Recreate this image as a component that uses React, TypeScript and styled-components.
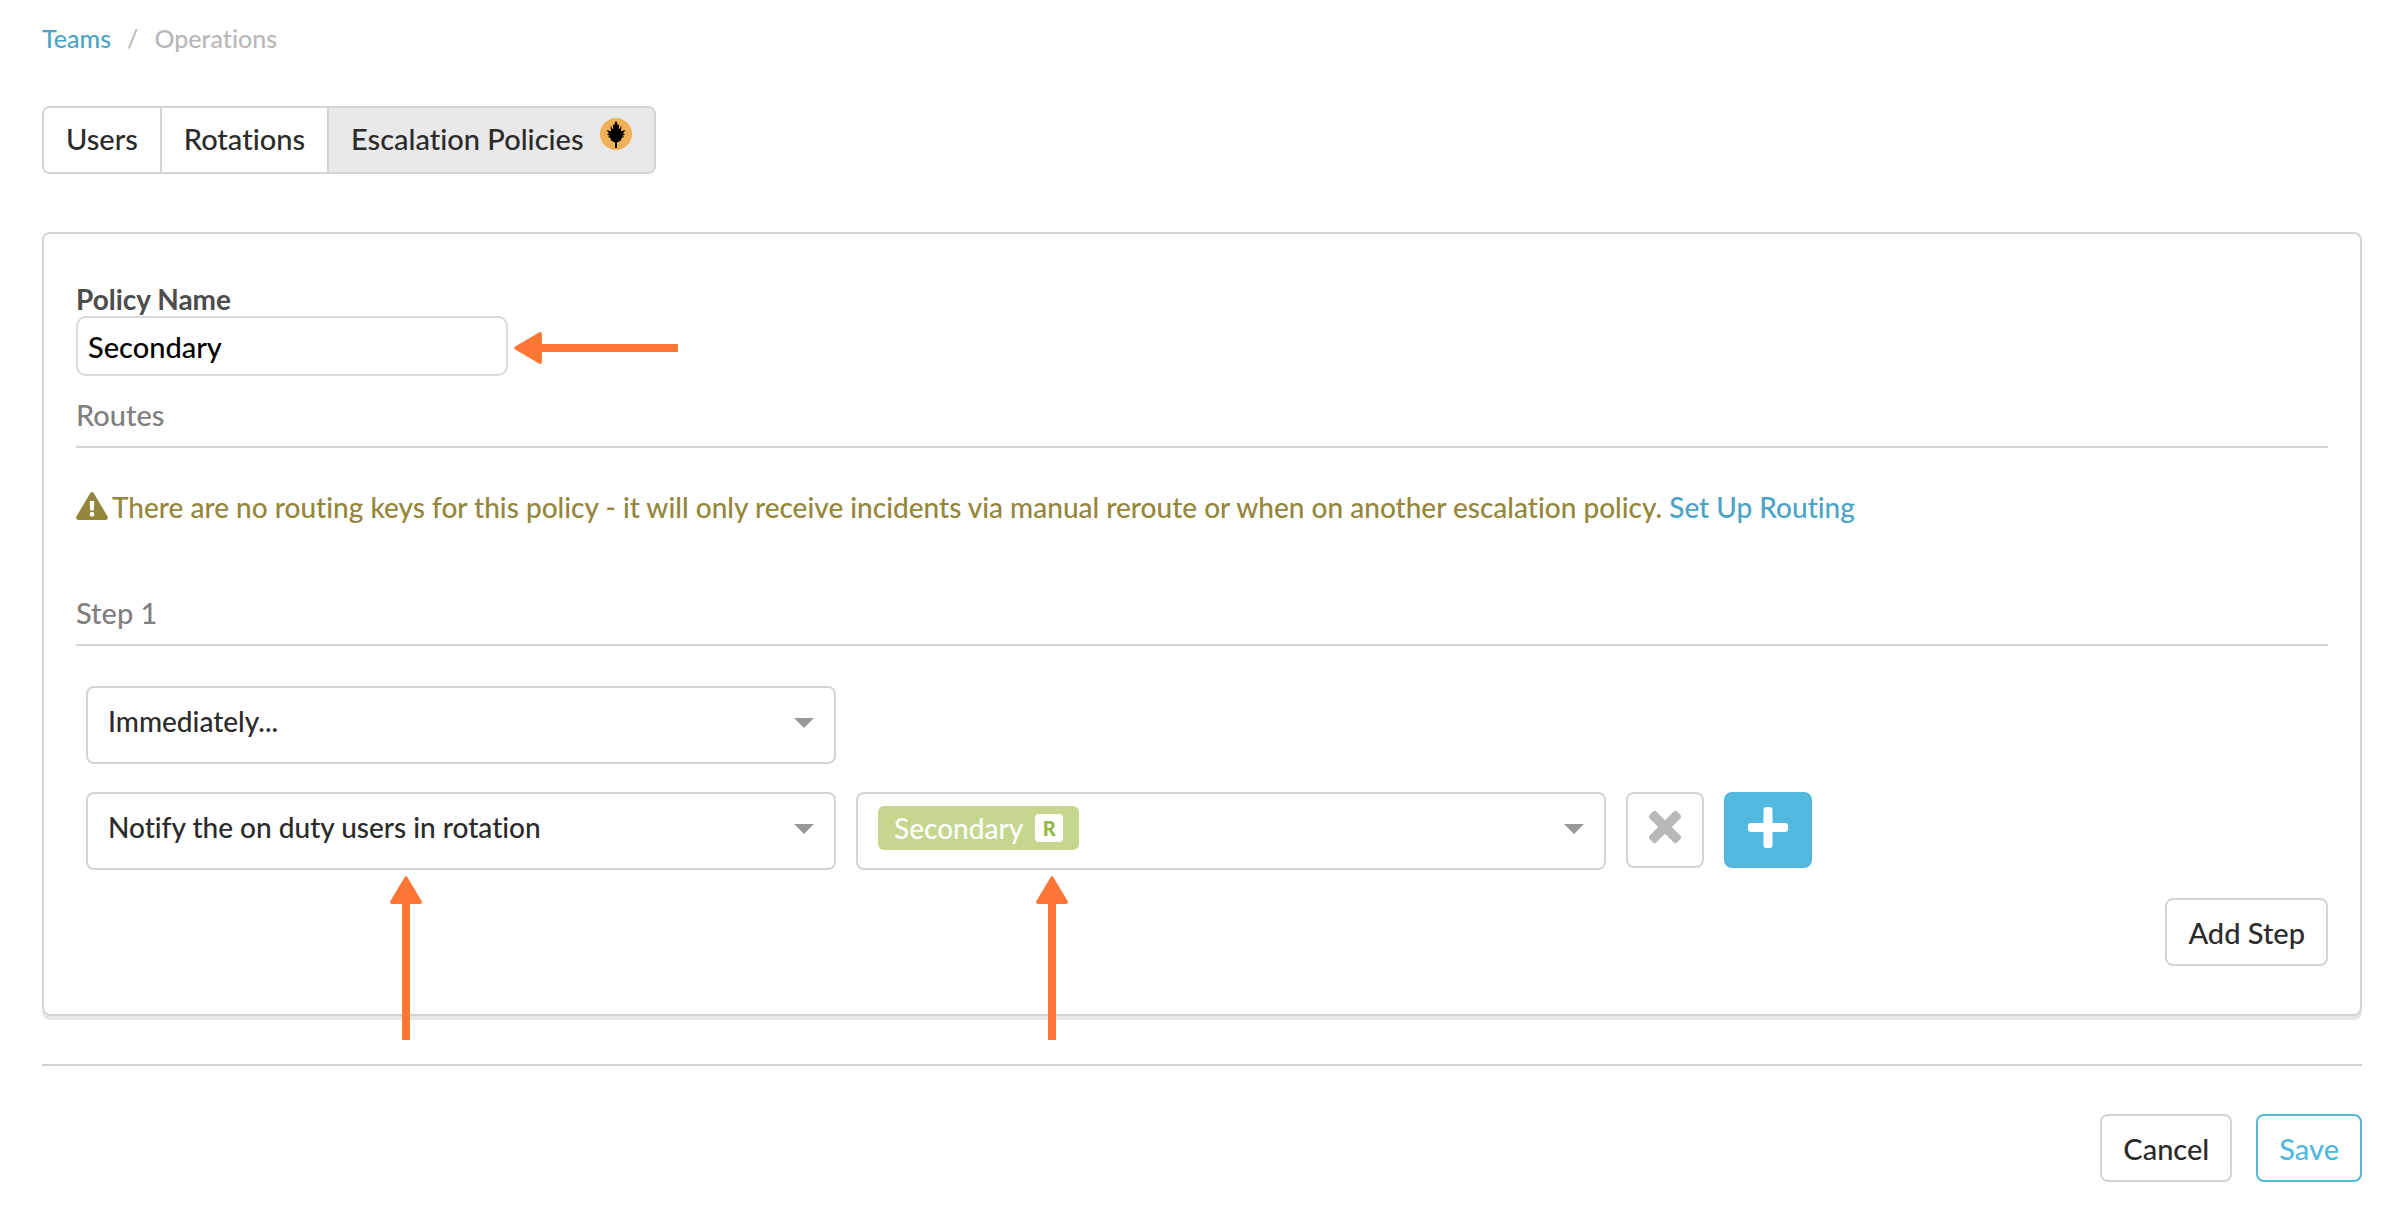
import React from 'react';
import styled, { createGlobalStyle } from 'styled-components';

const line = '#d4d4d4';
const ink = '#2b2b2b';
const blue = '#52b8e0';
const link = '#4ba3c7';

const GlobalStyle = createGlobalStyle`
  *, *::before, *::after { box-sizing: border-box; }
  body {
    margin: 0;
    background: #fff;
    color: ${ink};
    font: 500 29px/34px Lato, "Open Sans", sans-serif;
    font-variant-ligatures: none;
  }
  button, input, select { font: inherit; font-variant-ligatures: none; color: inherit; margin: 0; }
`;

const Page = styled.div`
  padding: 22px 36px 34px 42px;
`;

const Breadcrumb = styled.nav`
  display: flex;
  gap: 16px;
  font-size: 25px;
  line-height: 32px;
  color: #b8b8b8;
`;

const Link = styled.a`
  color: ${link};
  text-decoration: none;
`;

const Tabs = styled.div`
  display: inline-flex;
  margin-top: 52px;
  border: 2px solid ${line};
  border-radius: 8px;
  overflow: hidden;
`;

const Tab = styled.button<{ $active?: boolean }>`
  display: flex;
  gap: 16px;
  height: 64px;
  padding: 14px 22px 16px;
  border: 0;
  border-left: 2px solid ${line};
  background: ${(p) => (p.$active ? '#e9e9e9' : '#fff')};
  &:first-child { border-left: 0; }
`;

const Badge = styled.svg`
  display: block;
  width: 32px;
  height: 32px;
  margin-top: -4px;
`;

const Card = styled.main`
  margin-top: 58px;
  padding: 48px 32px;
  border: 2px solid ${line};
  border-radius: 8px;
  box-shadow: 0 4px 0 #e7e7e7;
`;

const FieldLabel = styled.label`
  display: block;
  font-size: 28px;
  font-weight: 700;
  color: #4d4d4d;
`;

const Anchor = styled.div`
  position: relative;
  flex: 0 1 750px;
  min-width: 0;
`;

const NameAnchor = styled(Anchor)`
  width: 432px;
`;

const NameInput = styled.input`
  display: block;
  width: 100%;
  height: 60px;
  padding: 0 10px;
  border: 2px solid #d9d9d9;
  border-radius: 10px;
  background: #fff;
  color: #000;
`;

const SectionTitle = styled.h2<{ $gap: number }>`
  margin: ${(p) => p.$gap}px 0 0;
  padding-bottom: 14px;
  border-bottom: 2px solid ${line};
  font-size: 29px;
  font-weight: 500;
  color: #808080;
`;

const Warning = styled.p`
  display: flex;
  gap: 4px;
  margin: 42px 0 0;
  font-size: 28px;
  color: #94863a;
`;

const WarningIcon = styled.svg`
  flex: none;
  width: 32px;
  height: 28px;
  margin-top: 2px;
`;

const StepRows = styled.div`
  display: flex;
  flex-direction: column;
  gap: 28px;
  margin-top: 40px;
  padding-left: 10px;
`;

const Row = styled.div`
  display: flex;
  gap: 20px;
`;

const Select = styled.select`
  display: block;
  appearance: none;
  width: 100%;
  height: 78px;
  padding: 0 60px 8px 20px;
  border: 2px solid ${line};
  border-radius: 8px;
  background: #fff;
  font-size: 28px;
`;

const TagSelect = styled.button`
  display: flex;
  align-items: flex-start;
  width: 100%;
  height: 78px;
  padding: 12px 20px;
  border: 2px solid ${line};
  border-radius: 8px;
  background: #fff;
`;

const Tag = styled.span`
  display: flex;
  align-items: center;
  gap: 12px;
  height: 44px;
  padding: 0 16px;
  border-radius: 6px;
  background: #c5d78e;
  color: #fff;
  font-size: 28px;
`;

const TagKind = styled.span`
  width: 28px;
  height: 28px;
  border-radius: 4px;
  background: #fff;
  color: #93b83f;
  font-size: 20px;
  font-weight: 900;
  line-height: 28px;
  text-align: center;
`;

const Caret = styled.span`
  position: absolute;
  top: 32px;
  right: 22px;
  border: 10px solid transparent;
  border-top-color: #999;
  border-bottom: 0;
  pointer-events: none;
`;

const IconButton = styled.button<{ $primary?: boolean }>`
  display: flex;
  justify-content: center;
  flex: none;
  width: ${(p) => (p.$primary ? 88 : 78)}px;
  height: 76px;
  padding: 12px 0;
  border: 2px solid ${(p) => (p.$primary ? blue : line)};
  border-radius: 8px;
  background: ${(p) => (p.$primary ? blue : '#fff')};
`;

const Button = styled.button<{ $accent?: boolean }>`
  height: 68px;
  padding: 2px 21px 0;
  border: 2px solid ${(p) => (p.$accent ? blue : line)};
  border-radius: 8px;
  background: #fff;
  color: ${(p) => (p.$accent ? blue : ink)};
`;

const Actions = styled.div`
  display: flex;
  justify-content: flex-end;
  gap: 24px;
`;

const CardActions = styled(Actions)`
  margin-top: 28px;
`;

const Footer = styled(Actions)`
  margin-top: 48px;
  padding-top: 48px;
  border-top: 2px solid ${line};
`;

const LeftArrow = styled.svg`
  position: absolute;
  top: 16px;
  left: calc(100% + 6px);
  width: 164px;
  height: 32px;
`;

const UpArrow = styled.svg<{ $left: number }>`
  position: absolute;
  top: calc(100% + 6px);
  left: ${(p) => p.$left}px;
  width: 32px;
  height: 164px;
  pointer-events: none;
`;

const PointUp = ({ left }: { left: number }) => (
  <UpArrow $left={left} viewBox="0 0 32 164" fill="#ff7534" aria-hidden="true">
    <path d="M14.6 1.2Q16-.8 17.4 1.2L31.6 25Q32.8 28 30 28H20V164H12V28H2Q-.8 28 .4 25Z" />
  </UpArrow>
);

export default function App() {
  return (
    <>
      <GlobalStyle />
      <Page>
        <Breadcrumb aria-label="Breadcrumb">
          <Link href="#teams">Teams</Link>
          <span>/</span>
          <span>Operations</span>
        </Breadcrumb>

        <Tabs>
          <Tab type="button">Users</Tab>
          <Tab type="button">Rotations</Tab>
          <Tab type="button" $active>
            Escalation Policies
            <Badge viewBox="0 0 32 32" aria-hidden="true">
              <circle cx="16" cy="16" r="16" fill="#f1b156" />
              <path
                d="M16 3L17.6 5.4L17.3 7.6L19.4 6.6L18.6 10.8L19.4 11L21.4 7.4L21 13.2L25.4 12L23 15.4L25.2 16L22 18.2L24.4 18.6L20.8 20.8L21.4 22.2L17 24.6V30H15V24.6L10.6 22.2L11.2 20.8L7.6 18.6L10 18.2L6.8 16L9 15.4L6.6 12L11 13.2L10.6 7.4L12.6 11L13.4 10.8L12.6 6.6L14.7 7.6L14.4 5.4Z"
                fill="#000"
              />
            </Badge>
          </Tab>
        </Tabs>

        <Card>
          <FieldLabel htmlFor="policy-name">Policy Name</FieldLabel>
          <NameAnchor>
            <NameInput id="policy-name" type="text" defaultValue="Secondary" />
            <LeftArrow viewBox="0 0 164 32" fill="#ff7534" aria-hidden="true">
              <path d="M1.2 14.6Q-.8 16 1.2 17.4L25 31.6Q28 32.8 28 30V20H164V12H28V2Q28-.8 25 .4Z" />
            </LeftArrow>
          </NameAnchor>

          <SectionTitle $gap={22}>Routes</SectionTitle>
          <Warning>
            <WarningIcon viewBox="0 0 32 28" aria-hidden="true">
              <path
                d="M14 1.4Q16-1.2 18 1.4L31.6 24.6Q32.6 28 29.4 28H2.6Q-.6 28 .4 24.6Z"
                fill="#94863a"
              />
              <path d="M13.6 9H18.4L17.8 18.4H14.2Z" fill="#fff" />
              <rect x="13.8" y="20" width="4.4" height="4.4" rx="1.6" fill="#fff" />
            </WarningIcon>
            <span>
              There are no routing keys for this policy - it will only receive incidents via manual
              reroute or when on another escalation policy. <Link href="#routing">Set Up Routing</Link>
            </span>
          </Warning>

          <SectionTitle $gap={72}>Step 1</SectionTitle>
          <StepRows>
            <Row>
              <Anchor>
                <Select aria-label="Delay">
                  <option>Immediately...</option>
                </Select>
                <Caret />
              </Anchor>
            </Row>
            <Row>
              <Anchor>
                <Select aria-label="Action">
                  <option>Notify the on duty users in rotation</option>
                </Select>
                <Caret />
                <PointUp left={304} />
              </Anchor>
              <Anchor>
                <TagSelect type="button" aria-haspopup="listbox">
                  <Tag>
                    Secondary
                    <TagKind>R</TagKind>
                  </Tag>
                </TagSelect>
                <Caret />
                <PointUp left={180} />
              </Anchor>
              <IconButton type="button" aria-label="Remove">
                <svg width="42" height="42" viewBox="0 0 42 42" fill="#b8b8b8" aria-hidden="true">
                  <g transform="rotate(45 21 21)">
                    <rect x="1.5" y="16.2" width="39" height="9.6" rx="2.6" />
                    <rect x="16.2" y="1.5" width="9.6" height="39" rx="2.6" />
                  </g>
                </svg>
              </IconButton>
              <IconButton type="button" aria-label="Add" $primary>
                <svg width="42" height="42" viewBox="0 0 42 42" fill="#fff" aria-hidden="true">
                  <rect x="16.5" y="1" width="9" height="41" rx="3" />
                  <rect x="1" y="17" width="40" height="9" rx="3" />
                </svg>
              </IconButton>
            </Row>
          </StepRows>
          <CardActions>
            <Button type="button">Add Step</Button>
          </CardActions>
        </Card>

        <Footer>
          <Button type="button">Cancel</Button>
          <Button type="button" $accent>
            Save
          </Button>
        </Footer>
      </Page>
    </>
  );
}
